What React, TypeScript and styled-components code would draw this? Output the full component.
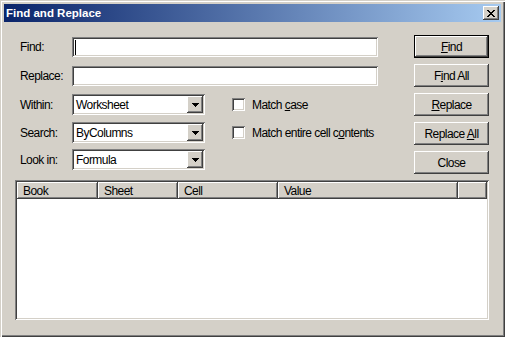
import React from "react";
import styled, { createGlobalStyle, css } from "styled-components";

const FACE = "#d4d0c8";
const HILITE = "#ffffff";
const SHADOW = "#808080";
const DARK = "#404040";

const GlobalStyle = createGlobalStyle`
  html, body { margin: 0; padding: 0; background: ${FACE}; }
  body {
    font-family: "Liberation Sans", Arial, sans-serif;
    font-size: 12px;
    letter-spacing: -0.55px;
    color: #000;
  }
  * { box-sizing: border-box; }
`;

const raised = css`
  box-shadow: inset -1px -1px ${DARK}, inset 1px 1px ${HILITE}, inset -2px -2px ${SHADOW};
`;

const sunken = css`
  box-shadow: inset 1px 1px ${SHADOW}, inset -1px -1px ${HILITE}, inset 2px 2px ${DARK}, inset -2px -2px ${FACE};
`;

const Window = styled.div`
  width: 505px;
  height: 337px;
  padding: 4px;
  display: flex;
  flex-direction: column;
  background: ${FACE};
  box-shadow: inset 1px 1px ${FACE}, inset 2px 2px ${HILITE}, inset -1px -1px ${DARK}, inset -2px -2px ${SHADOW};
`;

const TitleBar = styled.div`
  height: 18px;
  flex: none;
  display: flex;
  align-items: center;
  justify-content: space-between;
  padding: 0 2px 0 2px;
  background: linear-gradient(to right, #0a246a, #a6caf0);
`;

const TitleText = styled.span`
  font-family: "Liberation Sans", Arial, sans-serif;
  font-weight: bold;
  font-size: 11.5px;
  letter-spacing: 0;
  color: #fff;
  line-height: 18px;
`;

const CloseBox = styled.div`
  width: 16px;
  height: 14px;
  background: ${FACE};
  display: flex;
  align-items: center;
  justify-content: center;
  ${raised};
`;

const Body = styled.div`
  flex: 1;
  display: flex;
  flex-direction: column;
  padding: 13px 12px 13px 11px;
  min-height: 0;
`;

const Top = styled.div`
  display: flex;
  justify-content: space-between;
  align-items: flex-start;
  flex: none;
`;

const Form = styled.div`
  padding-top: 2px;
  padding-left: 5px;
  display: flex;
  flex-direction: column;
`;

const Row = styled.div<{ $gap: number }>`
  display: flex;
  align-items: center;
  margin-top: ${(p) => p.$gap}px;
`;

const Label = styled.span`
  width: 52px;
  flex: none;
  white-space: nowrap;
`;

const TextField = styled.div`
  width: 306px;
  height: 20px;
  background: #fff;
  padding: 2px 0 2px 3px;
  display: flex;
  align-items: center;
  ${sunken};
`;

const Caret = styled.span`
  width: 1px;
  height: 15px;
  background: #000;
`;

const Select = styled.div`
  width: 133px;
  height: 21px;
  background: #fff;
  padding: 2px;
  display: flex;
  align-items: center;
  ${sunken};
`;

const SelectValue = styled.span`
  flex: 1;
  padding-left: 2px;
  white-space: nowrap;
`;

const DropButton = styled.div`
  width: 16px;
  height: 17px;
  background: ${FACE};
  display: flex;
  align-items: center;
  justify-content: center;
  ${raised};
`;

const CheckOption = styled.label`
  display: flex;
  align-items: center;
  gap: 7px;
  margin-left: 27px;
  white-space: nowrap;
`;

const CheckBox = styled.span`
  width: 13px;
  height: 13px;
  background: #fff;
  flex: none;
  ${sunken};
`;

const Buttons = styled.div`
  display: flex;
  flex-direction: column;
  gap: 6px;
`;

const Button = styled.div<{ $default?: boolean }>`
  width: 75px;
  height: 23px;
  background: ${FACE};
  display: flex;
  align-items: center;
  justify-content: center;
  white-space: nowrap;
  ${(p) =>
    p.$default
      ? css`
          box-shadow: inset 0 0 0 1px #000, inset -2px -2px ${DARK}, inset 2px 2px ${HILITE}, inset -3px -3px ${SHADOW};
        `
      : raised};
`;

const Key = styled.u`
  text-decoration: underline;
  text-underline-offset: 1px;
`;

const ListView = styled.div`
  flex: 1;
  margin-top: 6px;
  background: #fff;
  padding: 2px;
  display: flex;
  flex-direction: column;
  ${sunken};
`;

const Header = styled.div`
  display: grid;
  grid-template-columns: 81px 80px 100px 180px 1fr;
  height: 17px;
  flex: none;
`;

const HeaderCell = styled.div`
  background: ${FACE};
  padding-left: 6px;
  display: flex;
  align-items: center;
  white-space: nowrap;
  ${raised};
`;

const CloseGlyph = () => (
  <svg width="8" height="7" viewBox="0 0 8 7" shapeRendering="crispEdges">
    {[
      [0, 0, 2], [6, 0, 2],
      [1, 1, 2], [5, 1, 2],
      [2, 2, 4],
      [3, 3, 2],
      [2, 4, 4],
      [1, 5, 2], [5, 5, 2],
      [0, 6, 2], [6, 6, 2],
    ].map(([x, y, w], i) => (
      <rect key={i} x={x} y={y} width={w} height={1} fill="#000" />
    ))}
  </svg>
);

const Arrow = () => (
  <svg width="7" height="4" viewBox="0 0 7 4" shapeRendering="crispEdges">
    <rect x="0" y="0" width="7" height="1" fill="#000" />
    <rect x="1" y="1" width="5" height="1" fill="#000" />
    <rect x="2" y="2" width="3" height="1" fill="#000" />
    <rect x="3" y="3" width="1" height="1" fill="#000" />
  </svg>
);

const Combo = ({ value }: { value: string }) => (
  <Select>
    <SelectValue>{value}</SelectValue>
    <DropButton>
      <Arrow />
    </DropButton>
  </Select>
);

export default function App() {
  return (
    <>
      <GlobalStyle />
      <Window>
        <TitleBar>
          <TitleText>Find and Replace</TitleText>
          <CloseBox>
            <CloseGlyph />
          </CloseBox>
        </TitleBar>
        <Body>
          <Top>
            <Form>
              <Row $gap={0}>
                <Label>Find:</Label>
                <TextField>
                  <Caret />
                </TextField>
              </Row>
              <Row $gap={9}>
                <Label>Replace:</Label>
                <TextField />
              </Row>
              <Row $gap={8}>
                <Label>Within:</Label>
                <Combo value="Worksheet" />
                <CheckOption>
                  <CheckBox />
                  <span>
                    Match <Key>c</Key>ase
                  </span>
                </CheckOption>
              </Row>
              <Row $gap={7}>
                <Label>Search:</Label>
                <Combo value="ByColumns" />
                <CheckOption>
                  <CheckBox />
                  <span>
                    Match entire cell c<Key>o</Key>ntents
                  </span>
                </CheckOption>
              </Row>
              <Row $gap={6}>
                <Label>Look in:</Label>
                <Combo value="Formula" />
              </Row>
            </Form>
            <Buttons>
              <Button $default>
                <span>
                  <Key>F</Key>ind
                </span>
              </Button>
              <Button>
                <span>
                  F<Key>i</Key>nd All
                </span>
              </Button>
              <Button>
                <span>
                  <Key>R</Key>eplace
                </span>
              </Button>
              <Button>
                <span>
                  Replace <Key>A</Key>ll
                </span>
              </Button>
              <Button>Close</Button>
            </Buttons>
          </Top>
          <ListView>
            <Header>
              <HeaderCell>Book</HeaderCell>
              <HeaderCell>Sheet</HeaderCell>
              <HeaderCell>Cell</HeaderCell>
              <HeaderCell>Value</HeaderCell>
              <HeaderCell />
            </Header>
          </ListView>
        </Body>
      </Window>
    </>
  );
}
